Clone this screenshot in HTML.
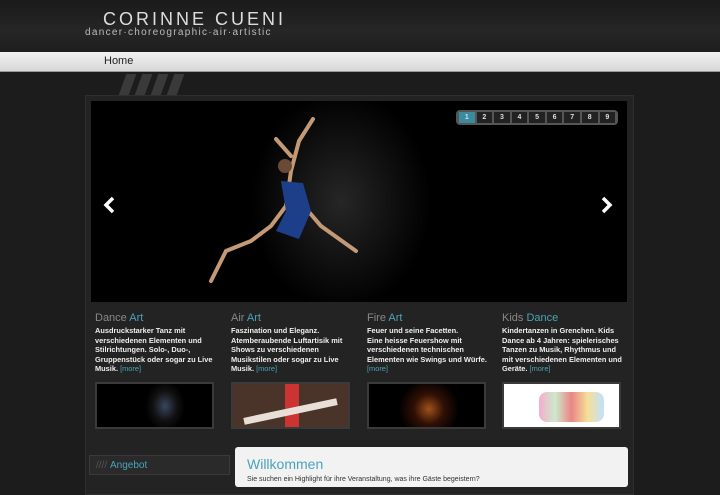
<!DOCTYPE html>
<html><head><meta charset="utf-8"><style>
*{margin:0;padding:0;box-sizing:border-box}
body{width:720px;height:480px;overflow:hidden;background:#1c1c1c;font-family:"Liberation Sans",sans-serif;position:relative}
.hdr{position:absolute;left:0;top:0;width:720px;height:52px;background:linear-gradient(#1a1a1a,#262626 60%,#1e1e1e)}
.t1{position:absolute;left:103px;top:9px;color:#ddd;font-size:18px;letter-spacing:3px;font-weight:300}
.t2{position:absolute;left:85px;top:27px;color:#bbb;font-size:10px;letter-spacing:1.3px}
.nav{position:absolute;left:0;top:52px;width:720px;height:20px;background:linear-gradient(#f2f2f2,#d8d8d8);border-bottom:1px solid #999}
.nav span{position:absolute;left:104px;top:3px;font-size:11px;color:#222}
.str{position:absolute;top:74px;width:10px;height:24px;background:#3a3a3a;transform:skewX(-20deg)}
.box{position:absolute;left:85px;top:95px;width:549px;height:400px;background:#232323;border:1px solid #2e2e2e}
.sl{position:absolute;left:91px;top:101px;width:536px;height:201px;background:radial-gradient(ellipse 90px 110px at 250px 100px,#262626,#000)}
.pg{position:absolute;left:456px;top:110px;width:162px;height:15px;border-radius:4px;background:#555;padding:2px 3px;display:flex;gap:2px}
.pg b{width:16px;height:11px;background:#222;color:#ddd;font-size:7px;text-align:center;line-height:11px}
.pg b.a{background:#3a8aa0}
.col{position:absolute;top:314px;width:130px;font-size:7.4px;color:#eee;line-height:9.4px;font-weight:bold}
.col h3{font-size:11px;font-weight:normal;color:#888;margin-bottom:3px}
.col h3 i,.m{color:#4aa3ba;font-style:normal;font-weight:normal}
.th{position:absolute;top:382px;width:119px;height:47px;border:2px solid #3a3a3a;background:#000}
.ang{position:absolute;left:89px;top:455px;width:141px;height:20px;background:#2a2a2a;border:1px solid #3a3a3a;color:#4aa3ba;font-size:10px;padding:4px 0 0 20px}
.wil{position:absolute;left:235px;top:447px;width:393px;height:40px;background:#f2f2f2;border-radius:3px}
.wil h2{font-weight:normal;color:#4aa3ba;font-size:14px;margin:9px 0 0 12px}
.wil p{font-size:7px;color:#333;margin:4px 0 0 12px}
</style></head><body>
<div class="hdr"><div class="t1">CORINNE CUENI</div><div class="t2">dancer·choreographic·air·artistic</div></div>
<div class="nav"><span>Home</span></div>
<div class="str" style="left:122px"></div><div class="str" style="left:138px"></div><div class="str" style="left:154px"></div><div class="str" style="left:170px"></div>
<div class="box"></div>
<div class="sl">
<svg style="position:absolute;left:100px;top:10px" width="180" height="180"><path d="M122 8 L108 30 L100 60 L95 95 L80 115 L60 130 L35 140 L20 170 M100 80 L130 115 L165 140 M100 45 L85 28" stroke="#c49a76" stroke-width="4" fill="none" stroke-linecap="round"/><path d="M90 70 L112 72 L120 100 L108 128 L85 120 L95 100 Z" fill="#1d3f8a"/><circle cx="94" cy="55" r="7" fill="#6b4a35"/></svg>
</div>
<div class="pg"><b class="a">1</b><b>2</b><b>3</b><b>4</b><b>5</b><b>6</b><b>7</b><b>8</b><b>9</b></div>
<svg style="position:absolute;left:102px;top:196px" width="14" height="18"><path d="M11 2 L4 9 L11 16" stroke="#fff" stroke-width="3.5" fill="none"/></svg>
<svg style="position:absolute;left:600px;top:196px" width="14" height="18"><path d="M3 2 L10 9 L3 16" stroke="#fff" stroke-width="3.5" fill="none"/></svg>
<div class="col" style="left:95px"><h3>Dance <i>Art</i></h3>Ausdruckstarker Tanz mit verschiedenen Elementen und Stilrichtungen. Solo-, Duo-, Gruppenstück oder sogar zu Live Musik. <span class="m">[more]</span></div>
<div class="col" style="left:231px"><h3>Air <i>Art</i></h3>Faszination und Eleganz. Atemberaubende Luftartisik mit Shows zu verschiedenen Musikstilen oder sogar zu Live Musik. <span class="m">[more]</span></div>
<div class="col" style="left:367px"><h3>Fire <i>Art</i></h3>Feuer und seine Facetten.<br>Eine heisse Feuershow mit verschiedenen technischen Elementen wie Swings und Würfe.<br><span class="m">[more]</span></div>
<div class="col" style="left:502px;width:122px"><h3>Kids <i>Dance</i></h3>Kindertanzen in Grenchen. Kids Dance ab 4 Jahren: spielerisches Tanzen zu Musik, Rhythmus und mit verschiedenen Elementen und Geräte. <span class="m">[more]</span></div>
<div class="th" style="left:95px;background:radial-gradient(ellipse 20px 25px at 68px 22px,#3a4560 0,#111 60%,#000 100%)"></div>
<div class="th" style="left:231px;background:#4a3328"><div style="position:absolute;left:52px;top:0;width:14px;height:43px;background:#c33"></div><div style="position:absolute;left:10px;top:24px;width:95px;height:7px;background:#e8e0d8;transform:rotate(-12deg)"></div></div>
<div class="th" style="left:367px;background:radial-gradient(circle at 60px 25px,#a0501a 0,#301005 15px,#000 30px)"></div>
<div class="th" style="left:502px;background:#fff"><div style="position:absolute;left:35px;top:8px;width:65px;height:30px;background:linear-gradient(90deg,#e7a,#ada,#d33,#ec5,#9cf);opacity:.6;border-radius:8px"></div></div>
<div class="ang"><span style="color:#555;position:absolute;left:6px">////</span>Angebot</div>
<div class="wil"><h2>Willkommen</h2><p>Sie suchen ein Highlight für ihre Veranstaltung, was ihre Gäste begeistern?</p></div>
</body></html>
